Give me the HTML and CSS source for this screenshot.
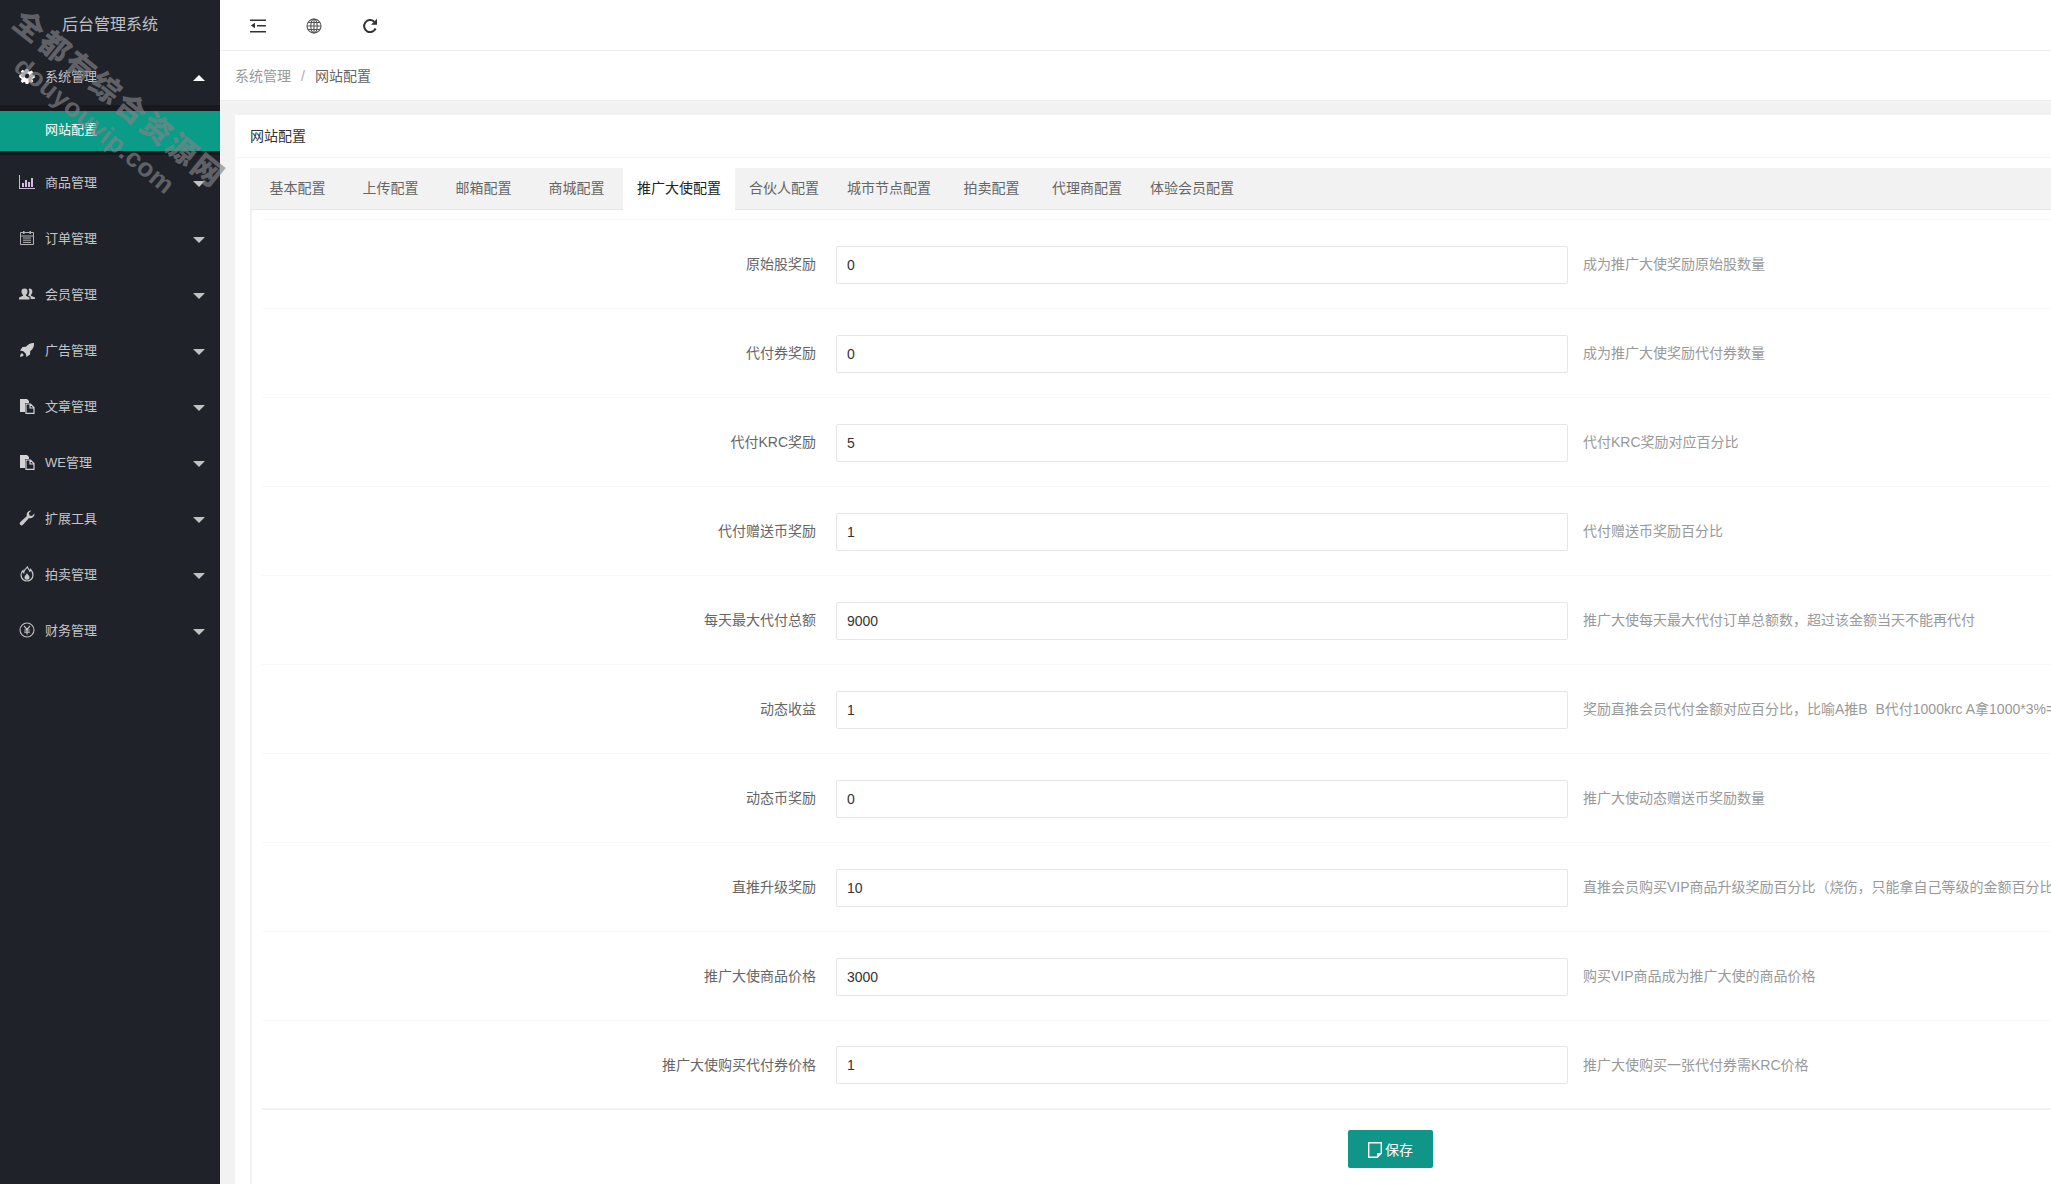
FILE: index.html
```html
<!DOCTYPE html>
<html lang="zh-CN">

<head>
    <meta charset="UTF-8">
    <title>后台管理系统</title>
    <link rel="stylesheet" href="styles.css">
</head>

<body>
    <aside class="sidebar">
        <div class="logo">后台管理系统</div>
        <ul class="nav">
            <li class="nav-item">
                <svg class="nav-icon" viewBox="0 0 16 16"><path fill="#fff" fill-rule="evenodd" d="M6.7 1h2.6l.4 1.9 1.2.5 1.6-1 1.8 1.8-1 1.6.5 1.2 1.9.4v2.6l-1.9.4-.5 1.2 1 1.6-1.8 1.8-1.6-1-1.2.5-.4 1.9H6.7l-.4-1.9-1.2-.5-1.6 1-1.8-1.8 1-1.6-.5-1.2L.3 9.3V6.7l1.9-.4.5-1.2-1-1.6 1.8-1.8 1.6 1 1.2-.5zM8 5.6a2.4 2.4 0 1 0 0 4.8 2.4 2.4 0 0 0 0-4.8z"/></svg>
                <span>系统管理</span><i class="arrow up"></i>
            </li>
            <li class="nav-child"><a class="child-active">网站配置</a></li>
            <li class="nav-item">
                <svg class="nav-icon" viewBox="0 0 16 16"><path fill="#c9b7d6" d="M0 1h1v13h15v1H0z"/><path fill="#d2bfe0" d="M3 9h2v4H3zM6 6h2v7H6zM9 8h2v5H9zM12 4h2v9h-2z"/></svg>
                <span>商品管理</span><i class="arrow"></i>
            </li>
            <li class="nav-item">
                <svg class="nav-icon" viewBox="0 0 16 16"><path fill="none" stroke="#b4b4b4" d="M1.5 2.5h13v12h-13zM1.5 6h13M4 8h8M4 10.200h8M4 12.400h8"/><path fill="#b4b4b4" d="M4 1h1.500v3H4zM10.500 1H12v3h-1.500z"/></svg>
                <span>订单管理</span><i class="arrow"></i>
            </li>
            <li class="nav-item">
                <svg class="nav-icon" viewBox="0 2 16 13"><path fill="#c8c8c8" d="M5.500 3a3 3 0 0 1 3 3.200c0 1.300-.6 2.500-1.500 3v1l3.500 1.700V14H0v-2.100l4-1.700v-1C3 8.700 2.500 7.500 2.500 6.200A3 3 0 0 1 5.500 3z"/><path fill="#c8c8c8" d="M10.500 3a3 3 0 0 1 2.800 3.200c0 1.300-.5 2.400-1.300 3v1l4 1.700V13.500h-4.300l-.2-2.300-2.500-1.300c.8-.9 1.300-2.200 1.300-3.700 0-1-.3-1.900-.7-2.500.3-.4.600-.7.900-.7z"/></svg>
                <span>会员管理</span><i class="arrow"></i>
            </li>
            <li class="nav-item">
                <svg class="nav-icon" viewBox="0 0 16 16"><path fill="#d0d0d0" d="M15 1c.3 3.500-1 6-3.700 8l-.3 3.500L7.500 15l-.7-3.200L4.300 9.300 1 8.500l2.600-3.600L7 4.700C9 2.200 11.600.8 15 1zM2.700 11.300c.8 0 1.900 1.100 1.900 1.900-.9 1-2.300 1.500-3.600 1.600.1-1.300.7-2.600 1.700-3.500z"/></svg>
                <span>广告管理</span><i class="arrow"></i>
            </li>
            <li class="nav-item">
                <svg class="nav-icon" viewBox="0 0 16 16"><path fill="#d4d4d4" d="M1 1h7l2 2v2H6v9H1z"/><path fill="none" stroke="#d4d4d4" stroke-width="1.200" d="M7 6h4.500L15 9.500v5.900H7zM11 6v4h4"/></svg>
                <span>文章管理</span><i class="arrow"></i>
            </li>
            <li class="nav-item">
                <svg class="nav-icon" viewBox="0 0 16 16"><path fill="#d4d4d4" d="M1 1h7l2 2v2H6v9H1z"/><path fill="none" stroke="#d4d4d4" stroke-width="1.200" d="M7 6h4.500L15 9.500v5.900H7zM11 6v4h4"/></svg>
                <span>WE管理</span><i class="arrow"></i>
            </li>
            <li class="nav-item">
                <svg class="nav-icon" viewBox="0 0 16 16"><path fill="#c8c8c8" d="M15.500 3.600a4.200 4.200 0 0 1-5.500 4.400l-6 6.700a1.800 1.800 0 0 1-2.700-2.600l6.600-6.100A4.200 4.200 0 0 1 12.400.5L9.900 3l.6 2.400 2.400.6z"/></svg>
                <span>扩展工具</span><i class="arrow"></i>
            </li>
            <li class="nav-item">
                <svg class="nav-icon" viewBox="0 0 16 16"><path fill="none" stroke="#c8c8c8" stroke-width="1.200" d="M8.500 1c.4 2 2 2.500 2.300 4.200.6-.4.800-1 .8-1.700 1.500 1.500 2.400 3.500 2.400 5.500a6 6 0 0 1-12 0c0-1.700.7-3.200 1.800-4.300 0 1 .3 1.700.9 2.100C4.500 4.200 6.500 2.800 8.500 1z"/><path fill="#c8c8c8" d="M8 7c.2 1.400 2.500 2.300 2.500 4.300a2.500 2.500 0 0 1-5 0C5.500 9.800 7.400 9 8 7z"/></svg>
                <span>拍卖管理</span><i class="arrow"></i>
            </li>
            <li class="nav-item">
                <svg class="nav-icon" viewBox="0 0 16 16"><circle cx="8" cy="8" r="7" fill="none" stroke="#c0c0c0" stroke-width="1.100"/><path fill="none" stroke="#c0c0c0" stroke-width="1.200" d="M5 3.800L8 7.500l3-3.700M8 7.500v5M5.200 8h5.600M5.200 10.200h5.600"/></svg>
                <span>财务管理</span><i class="arrow"></i>
            </li>
        </ul>
    </aside>

    <div class="watermark">
        <div class="wm-big">全都有综合资源网</div>
        <div class="wm-small">douyouvip.com</div>
    </div>

    <main class="main">
        <header class="topbar">
            <svg class="top-icon" viewBox="0 0 16 16"><path fill="#333" d="M0 1.500h16v1.500H0zM7 7h9v1.500H7zM0 13h16v1.500H0zM5 4.800v5.400L.8 7.500z"/></svg>
            <svg class="top-icon" viewBox="0 0 16 16"><g fill="none" stroke="#555" stroke-width="1.100"><circle cx="8" cy="8" r="7"/><ellipse cx="8" cy="8" rx="3.200" ry="7"/><path d="M1 8h14M2 4.500h12M2 11.500h12M8 1v14"/></g></svg>
            <svg class="top-icon" viewBox="0 0 16 16"><path fill="none" stroke="#333" stroke-width="2" d="M13.600 10.500A6 6 0 1 1 12.200 3.700"/><path fill="#333" d="M15 .8v6h-6z"/></svg>
        </header>

        <div class="crumbs">
            <span>系统管理</span><span class="sep">/</span><span class="current">网站配置</span>
        </div>

        <section class="card">
            <div class="card-head">网站配置</div>
            <div class="card-body">
                <ul class="tabs">
                    <li>基本配置</li>
                    <li>上传配置</li>
                    <li>邮箱配置</li>
                    <li>商城配置</li>
                    <li class="tab-active">推广大使配置</li>
                    <li>合伙人配置</li>
                    <li>城市节点配置</li>
                    <li>拍卖配置</li>
                    <li>代理商配置</li>
                    <li>体验会员配置</li>
                </ul>
                <form class="tab-content">
                    <div class="row">
                        <label>原始股奖励</label>
                        <input type="text" value="0">
                        <p class="hint">成为推广大使奖励原始股数量</p>
                    </div>
                    <div class="row">
                        <label>代付券奖励</label>
                        <input type="text" value="0">
                        <p class="hint">成为推广大使奖励代付券数量</p>
                    </div>
                    <div class="row">
                        <label>代付KRC奖励</label>
                        <input type="text" value="5">
                        <p class="hint">代付KRC奖励对应百分比</p>
                    </div>
                    <div class="row">
                        <label>代付赠送币奖励</label>
                        <input type="text" value="1">
                        <p class="hint">代付赠送币奖励百分比</p>
                    </div>
                    <div class="row">
                        <label>每天最大代付总额</label>
                        <input type="text" value="9000">
                        <p class="hint">推广大使每天最大代付订单总额数，超过该金额当天不能再代付</p>
                    </div>
                    <div class="row">
                        <label>动态收益</label>
                        <input type="text" value="1">
                        <p class="hint">奖励直推会员代付金额对应百分比，比喻A推B&nbsp; B代付1000krc A拿1000*3%=</p>
                    </div>
                    <div class="row">
                        <label>动态币奖励</label>
                        <input type="text" value="0">
                        <p class="hint">推广大使动态赠送币奖励数量</p>
                    </div>
                    <div class="row">
                        <label>直推升级奖励</label>
                        <input type="text" value="10">
                        <p class="hint">直推会员购买VIP商品升级奖励百分比（烧伤，只能拿自己等级的金额百分比</p>
                    </div>
                    <div class="row">
                        <label>推广大使商品价格</label>
                        <input type="text" value="3000">
                        <p class="hint">购买VIP商品成为推广大使的商品价格</p>
                    </div>
                    <div class="row row-last">
                        <label>推广大使购买代付券价格</label>
                        <input type="text" value="1">
                        <p class="hint">推广大使购买一张代付券需KRC价格</p>
                    </div>
                    <div class="actions">
                        <button type="button" class="btn-save">
                            <svg viewBox="0 0 14 16"><path fill="none" stroke="#fff" stroke-width="1.400" d="M.7.7h12.600v10.500l-4 4H.7z"/><path fill="#fff" d="M9 11h5l-5 5z"/></svg>
                            保存
                        </button>
                    </div>
                </form>
            </div>
        </section>
    </main>
</body>

</html>
```

FILE: styles.css
```css
* {
    box-sizing: border-box;
}

html,
body {
    height: 100%;
}

body {
    display: flex;
    margin: 0;
    overflow: hidden;
    background-color: #f2f2f2;
    font-family: 'Liberation Sans', 'Noto Sans CJK SC', sans-serif;
    font-size: 14px;
    color: #666;
}

ul {
    margin: 0;
    padding: 0;
    list-style: none;
}

/* sidebar */
.sidebar {
    flex: 0 0 220px;
    height: 100%;
    background-color: #20222a;
    color: #c4c5c8;
}

.logo {
    height: 49px;
    line-height: 50px;
    text-align: center;
    font-size: 16px;
    color: #bfc0c3;
}

.nav-item {
    display: flex;
    align-items: center;
    height: 56px;
    padding: 0 0 3px 19px;
    font-size: 13px;
    position: relative;
}

.nav-icon {
    flex: 0 0 16px;
    width: 16px;
    height: 16px;
    margin-right: 10px;
}

.arrow {
    position: absolute;
    right: 15px;
    top: 26px;
    border-left: 6px solid transparent;
    border-right: 6px solid transparent;
    border-top: 6px solid #c2c2c2;
}

.arrow.up {
    border-top: none;
    border-bottom: 6px solid #fff;
}

.nav-child {
    height: 50px;
    padding: 6px 0 4px;
    background-color: #17191f;
}

.child-active {
    display: block;
    height: 40px;
    line-height: 38px;
    padding-left: 45px;
    font-size: 13px;
    background-color: #0b9c88;
    color: #fff;
}

/* diagonal stamp over the sidebar */
.watermark {
    position: absolute;
    left: 0;
    top: 0;
    width: 300px;
    height: 240px;
    font-family: 'Noto Sans CJK SC', 'Liberation Sans', sans-serif;
    font-weight: 900;
    color: rgba(130, 130, 135, 0.68);
    pointer-events: none;
}

.wm-big {
    position: absolute;
    left: 19px;
    top: -5px;
    font-size: 30px;
    letter-spacing: 2.700px;
    line-height: 40px;
    white-space: nowrap;
    transform-origin: 0 50%;
    transform: rotate(39deg);
}

.wm-small {
    position: absolute;
    left: 18px;
    top: 46px;
    font-family: 'Liberation Sans', sans-serif;
    font-weight: 700;
    font-size: 26px;
    letter-spacing: 0.500px;
    line-height: 32px;
    white-space: nowrap;
    transform-origin: 0 50%;
    transform: rotate(39.500deg);
}

/* main column */
.main {
    flex: 1;
    min-width: 0;
    height: 100%;
    overflow: hidden;
}

.topbar {
    display: flex;
    align-items: center;
    gap: 40px;
    height: 51px;
    padding: 1px 0 0 30px;
    background-color: #fff;
    border-bottom: 1px solid #f0f0f0;
}

.top-icon {
    width: 16px;
    height: 16px;
}

.crumbs {
    height: 50px;
    line-height: 51px;
    padding-left: 15px;
    background-color: #fff;
    border-bottom: 1px solid #ececec;
    color: #999;
}

.sep {
    margin: 0 10px;
    color: #aaa;
}

.current {
    color: #666;
}

.card {
    margin: 14px -20px 0 15px;
    background-color: #fff;
}

.card-head {
    height: 43px;
    line-height: 43px;
    padding-left: 15px;
    border-bottom: 1px solid #f6f6f6;
    color: #333;
}

.card-body {
    padding: 10px 0 0 15px;
}

.tabs {
    display: flex;
    height: 42px;
    padding-left: 1px;
    background-color: #f2f2f2;
    border-bottom: 1px solid #e6e6e6;
}

.tabs li {
    min-width: 93px;
    height: 42px;
    padding: 0 14px;
    line-height: 41px;
    text-align: center;
    white-space: nowrap;
    color: #666;
}

.tabs .tab-active {
    background-color: #fff;
    color: #222;
}

.tab-content {
    padding: 9px 0 0 10px;
    border-left: 2px solid #f2f2f2;
}

.row {
    display: flex;
    align-items: center;
    height: 89px;
    padding-top: 1px;
    border-top: 1px solid #f7f7f7;
}

.row label {
    flex: 0 0 554px;
    padding-bottom: 3px;
    text-align: right;
    color: #666;
}

.row input {
    flex: 0 0 732px;
    height: 38px;
    margin-left: 20px;
    padding: 0 10px;
    border: 1px solid #e6e6e6;
    border-radius: 2px;
    font-family: inherit;
    font-size: 14px;
    color: #333;
    outline: none;
}

.hint {
    margin: 0 0 0 15px;
    padding-bottom: 3px;
    white-space: nowrap;
    color: #999;
}

.row-last {
    height: 90px;
    border-bottom: 2px solid #f2f2f2;
}

.actions {
    padding: 20px 0 30px 1086px;
}

.btn-save {
    display: flex;
    align-items: center;
    justify-content: center;
    gap: 3px;
    width: 85px;
    height: 38px;
    padding: 0;
    border: none;
    border-radius: 2px;
    background-color: #0f9688;
    font-family: inherit;
    font-size: 14px;
    color: #fff;
}

.btn-save svg {
    width: 14px;
    height: 16px;
    margin-top: 2px;
}
```
